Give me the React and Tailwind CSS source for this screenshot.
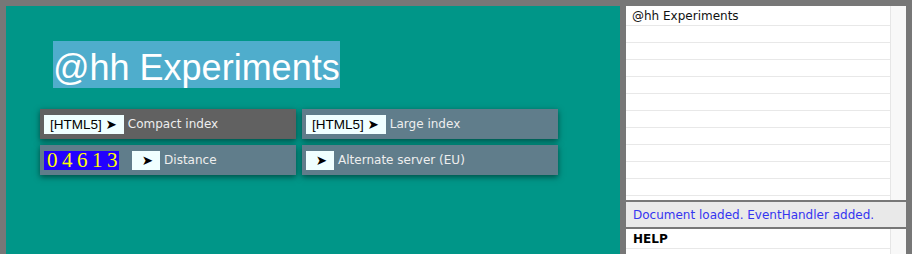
import React from "react";

const dv = { fontFamily: '"DejaVu Sans", Verdana, sans-serif' };
const lib = { fontFamily: '"Liberation Sans", Arial, "DejaVu Sans", sans-serif' };

function Box({ children }) {
  return (
    <span
      className="flex h-[19px] items-center bg-[#f0ffff] pl-[6px] pr-[7px] text-[13.5px] leading-[19px] text-black whitespace-pre"
      style={lib}
    >
      {children}
    </span>
  );
}

function Btn({ bg, children }) {
  return (
    <div
      className={`flex h-[30px] items-center gap-[4px] pl-[4px] text-[12px] text-[#eeeeee] shadow-[0_2px_6px_rgba(0,0,0,0.5)] ${bg}`}
      style={dv}
    >
      {children}
    </div>
  );
}

export default function App() {
  const rows = Array.from({ length: 11 });
  const digits = ["0", "4", "6", "1", "3"];
  return (
    <div className="flex h-[254px] w-[912px] gap-[6px] overflow-hidden bg-[#777777] px-[6px] pt-[6px]">
      {/* Left panel */}
      <div className="flex w-[614px] flex-col bg-[#009688] pl-[34px] pt-[35px]">
        <div className="ml-[13px] self-start">
          <div
            className="h-[47px] bg-[#4fadcc] pt-[9px] text-[36px] leading-[36px] text-white whitespace-nowrap"
            style={{ fontFamily: '"Liberation Sans", Arial, sans-serif' }}
          >
            @hh Experiments
          </div>
        </div>
        <div className="mt-[21px] grid w-[518px] grid-cols-[256px_256px] gap-[6px]">
          <Btn bg="bg-[#616161]">
            <Box>[HTML5] ➤</Box>
            <span>Compact index</span>
          </Btn>
          <Btn bg="bg-[#607d8b]">
            <Box>[HTML5] ➤</Box>
            <span>Large index</span>
          </Btn>
          <Btn bg="bg-[#607d8b]">
            <span
              className="flex h-[19px] w-[75px] items-center bg-[#2200ff] pl-[3px] text-[21px] leading-[19px] text-[#ffff00]"
              style={{ fontFamily: '"Liberation Serif", "Times New Roman", serif' }}
            >
              {digits.map((d, i) => (
                <span key={i} className={i < 4 ? "w-[15px]" : ""}>
                  {d}
                </span>
              ))}
            </span>
            <span className="ml-[9px]">
              <Box>{"\u00a0➤"}</Box>
            </span>
            <span>Distance</span>
          </Btn>
          <Btn bg="bg-[#607d8b]">
            <Box>{"\u00a0➤"}</Box>
            <span>Alternate server (EU)</span>
          </Btn>
        </div>
      </div>

      {/* Right panel */}
      <div className="flex w-[280px] flex-col" style={dv}>
        <div className="flex h-[194px] bg-white">
          <div className="flex-1 pt-[3px]">
            {rows.map((_, i) => (
              <div
                key={i}
                className="h-[17px] border-b border-[#e8e8e8] pl-[6px] text-[12px] leading-[15px] text-[#111]"
              >
                {i === 0 ? "@hh Experiments" : ""}
              </div>
            ))}
          </div>
          <div className="w-[16px] border-l border-[#e6e6e6] bg-[#f8f8f8]" />
        </div>
        <div className="mt-[2px] flex h-[25px] items-center bg-[#e9e9e9] pl-[7px] text-[12px] text-[#3535f0]">
          Document loaded. EventHandler added.
        </div>
        <div className="mt-[2px] flex flex-1 bg-white">
          <div className="flex-1">
            <div className="h-[20px] border-b border-[#e8e8e8] pl-[7px] pt-[1px] text-[12px] font-bold leading-[18px] text-black">
              HELP
            </div>
          </div>
          <div className="w-[16px] border-l border-[#e6e6e6] bg-[#f8f8f8]" />
        </div>
      </div>
    </div>
  );
}
